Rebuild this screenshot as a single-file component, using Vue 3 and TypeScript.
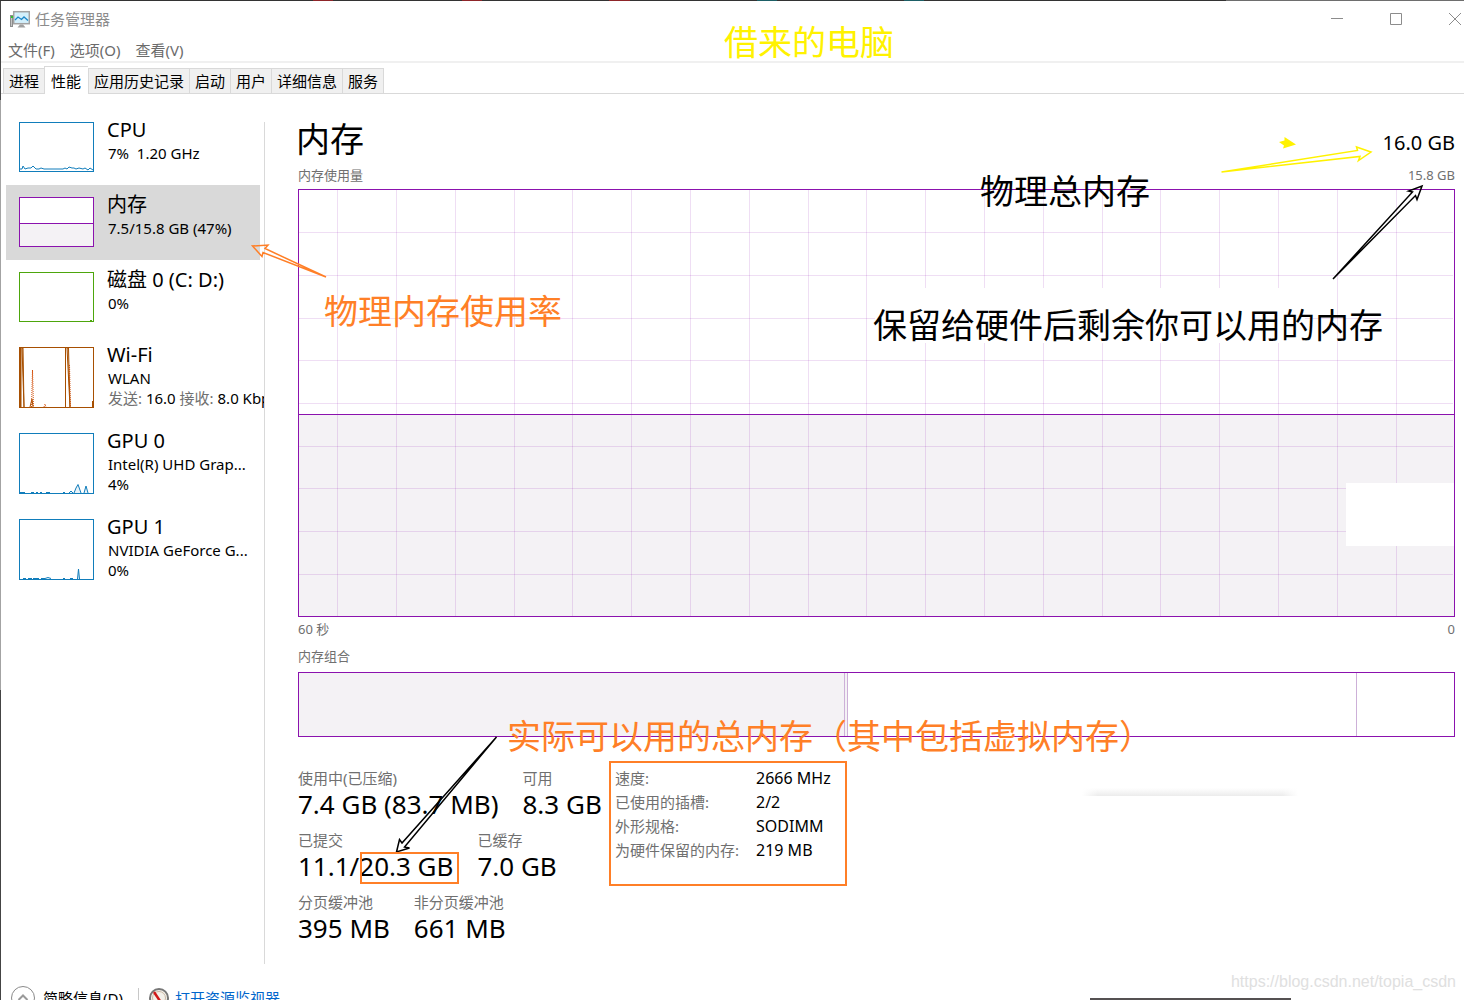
<script setup lang="ts">
interface Metric {
  label: string
  value: string
}

interface Resource {
  id: string
  name: string
  lines: string[]
  color: string
  height: number
}

const menus: string[] = ['文件(F)', '选项(O)', '查看(V)']
const tabs: string[] = ['进程', '性能', '应用历史记录', '启动', '用户', '详细信息', '服务']
const activeTab = '性能'

const resources: Resource[] = [
  { id: 'cpu', name: 'CPU', lines: ['7%  1.20 GHz'], color: '#117dbb', height: 50 },
  { id: 'memory', name: '内存', lines: ['7.5/15.8 GB (47%)'], color: '#8b12ae', height: 50 },
  { id: 'disk', name: '磁盘 0 (C: D:)', lines: ['0%'], color: '#4da60c', height: 50 },
  { id: 'wifi', name: 'Wi-Fi', lines: ['WLAN'], color: '#a74f01', height: 61 },
  { id: 'gpu0', name: 'GPU 0', lines: ['Intel(R) UHD Grap...', '4%'], color: '#117dbb', height: 61 },
  { id: 'gpu1', name: 'GPU 1', lines: ['NVIDIA GeForce G...', '0%'], color: '#117dbb', height: 61 },
]
const activeResource = 'memory'

const columns: number[] = [38, 97, 156, 215, 273, 332, 391, 450, 509, 567, 626, 685, 744, 803, 861, 920, 979, 1038, 1097]
const rows: number[] = [42, 85, 128, 170, 213, 256, 298, 341, 384]

const stats: Metric[][] = [
  [
    { label: '使用中(已压缩)', value: '7.4 GB (83.7 MB)' },
    { label: '可用', value: '8.3 GB' },
  ],
  [
    { label: '已提交', value: '11.1/20.3 GB' },
    { label: '已缓存', value: '7.0 GB' },
  ],
  [
    { label: '分页缓冲池', value: '395 MB' },
    { label: '非分页缓冲池', value: '661 MB' },
  ],
]

const details: Metric[] = [
  { label: '速度:', value: '2666 MHz' },
  { label: '已使用的插槽:', value: '2/2' },
  { label: '外形规格:', value: 'SODIMM' },
  { label: '为硬件保留的内存:', value: '219 MB' },
]
</script>

<template>
  <div class="window">
    <header class="titlebar">
      <svg class="app-icon" width="20" height="18" viewBox="0 0 20 18">
        <rect x="0.5" y="5.500" width="2" height="11" fill="#c4c4c4" stroke="#8d8d8d" />
        <rect x="1" y="6" width="2" height="2" fill="#2fc12f" />
        <rect x="3.700" y="1.700" width="15.600" height="12" fill="#d2effb" stroke="#a2a2a2" stroke-width="1.500" />
        <path d="M5 10 L8 7 L11.500 9.500 L14 7 L18 10.500" fill="none" stroke="#1c86c8" stroke-width="1.300" />
        <path d="M10 14.500 h3 l2.500 3 h-8 z" fill="#a0a0a0" />
      </svg>
      <h1 class="app-title">任务管理器</h1>
      <div class="window-buttons">
        <button type="button" aria-label="最小化">
          <svg width="12" height="12" viewBox="0 0 12 12"><path d="M0 5.500 H12" /></svg>
        </button>
        <button type="button" aria-label="最大化">
          <svg width="12" height="12" viewBox="0 0 12 12"><path d="M0.500 0.500 H11.500 V11.500 H0.500 Z" /></svg>
        </button>
        <button type="button" aria-label="关闭">
          <svg width="12" height="12" viewBox="0 0 12 12"><path d="M0 0 L12 12 M12 0 L0 12" /></svg>
        </button>
      </div>
    </header>

    <nav class="menubar">
      <button v-for="menu in menus" :key="menu" type="button">{{ menu }}</button>
    </nav>

    <div class="tabs" role="tablist">
      <button
        v-for="tab in tabs"
        :key="tab"
        type="button"
        role="tab"
        :aria-selected="tab === activeTab"
        :class="{ active: tab === activeTab }"
      >{{ tab }}</button>
    </div>

    <div class="body">
      <aside class="sidebar">
        <button
          v-for="item in resources"
          :key="item.id"
          type="button"
          class="resource"
          :class="{ active: item.id === activeResource }"
        >
          <svg class="thumb" width="75" :height="item.height" :viewBox="`0 0 75 ${item.height}`" fill="none">
            <rect x="0.5" y="0.5" width="74" :height="item.height - 1" fill="#fff" />
            <g v-if="item.id === 'cpu'" :stroke="item.color">
              <path d="M1 47 L3 47 L4 44 L6 47 L9 46 L12 46 L14 44 L17 47 L20 47 L22 46 L25 47 L44 47 L46 46 L48 47 L50 45 L53 46 L55 46 L57 47 L60 46 L64 47 L66 46 L69 48 L71 46 L74 48" />
            </g>
            <g v-else-if="item.id === 'memory'">
              <rect x="1" y="26" width="73" height="23" fill="#f4f2f5" />
              <path d="M1 26.500 H74" :stroke="item.color" />
            </g>
            <path v-else-if="item.id === 'disk'" d="M71 48.500 h2" :stroke="item.color" />
            <g v-else-if="item.id === 'wifi'" :stroke="item.color">
              <path d="M1.500 1 V60" stroke-width="2" />
              <path d="M3 1 L5 60 L4 1 Z" fill="#e9c9a9" />
              <path d="M46.500 1 V60" />
              <path d="M48 1 H49.500 L51 60 Z" fill="#e9c9a9" />
              <path d="M11 60 L13 52 L14 60" />
              <path d="M12.500 60 L13.500 23 L14.500 60 M50.500 18 L51.500 60 M25 60 L26 57 L27 60" stroke="#d4500b" stroke-dasharray="1 1" />
              <path d="M73.500 60 V54" />
            </g>
            <g v-else-if="item.id === 'gpu0'" :stroke="item.color" fill="#e8f2f8">
              <path d="M1 59.500 H6 M12 59.500 H15 M17 59.500 H19 M21 59.500 H23 M27 59.500 H31 M44 59.500 H46 M50 60 L52 58 L54 60 M55 60 L57 55 L59 51.500 L62 60 M65 60 L67 53 L69 60" />
            </g>
            <g v-else :stroke="item.color" fill="#e8f2f8">
              <path d="M4 59.500 H7 M9 59.500 H13 M14 59.500 H20 M22 59.500 H26 L29 58.500 L32 59.500 M44 59.500 H46 M51 59.500 H54 M58.500 60 L59.500 50 L60.500 60" />
            </g>
            <rect x="0.5" y="0.5" width="74" :height="item.height - 1" :stroke="item.color" />
          </svg>
          <span class="resource-text">
            <span class="resource-name">{{ item.name }}</span>
            <span v-for="line in item.lines" :key="line" class="resource-line">{{ line }}</span>
            <span v-if="item.id === 'wifi'" class="resource-line">
              <span class="muted">发送:</span> 16.0 <span class="muted">接收:</span> 8.0 Kbps
            </span>
          </span>
        </button>
      </aside>

      <main class="panel">
        <div class="panel-head">
          <h2>内存</h2>
          <span class="total">16.0 GB</span>
        </div>
        <div class="caption usage">
          <span>内存使用量</span>
          <span>15.8 GB</span>
        </div>
        <div class="chart">
          <svg viewBox="0 0 1155 426" preserveAspectRatio="none" shape-rendering="crispEdges">
            <rect x="0" y="225" width="1155" height="201" fill="#f4f2f5" />
            <g class="grid-lines">
              <path v-for="x in columns" :key="`c${x}`" :d="`M${x + 0.5} 0 V426`" />
              <path v-for="y in rows" :key="`r${y}`" :d="`M0 ${y + 0.5} H1154`" />
            </g>
            <rect x="576" y="98" width="430" height="55" fill="#fff" />
            <rect x="1047" y="293" width="108" height="63" fill="#fff" />
            <path d="M0 224.500 H1155" stroke="#8b12ae" vector-effect="non-scaling-stroke" />
          </svg>
        </div>
        <div class="caption axis">
          <span>60 秒</span>
          <span>0</span>
        </div>
        <div class="caption composition-title">内存组合</div>
        <div class="composition">
          <span class="in-use"></span>
          <span class="modified"></span>
          <span class="standby"></span>
          <span class="free"></span>
        </div>

        <div class="summary">
          <div class="stats">
            <dl v-for="(row, index) in stats" :key="index" class="stat-row">
              <div v-for="stat in row" :key="stat.label">
                <dt>{{ stat.label }}</dt>
                <dd>{{ stat.value }}</dd>
              </div>
            </dl>
          </div>
          <table class="details">
            <tbody>
              <tr v-for="detail in details" :key="detail.label">
                <th scope="row">{{ detail.label }}</th>
                <td>{{ detail.value }}</td>
              </tr>
            </tbody>
          </table>
        </div>
      </main>
    </div>

    <footer class="footer">
      <button type="button" class="brief">
        <svg width="26" height="26" viewBox="0 0 26 26" fill="none">
          <circle cx="13" cy="13" r="11.500" stroke="#8a8a8a" />
          <path d="M8.500 15 L13 10.500 L17.500 15" stroke="#9a9a9a" stroke-width="2" />
        </svg>
        <span>简略信息(<u>D</u>)</span>
      </button>
      <span class="separator"></span>
      <a href="#monitor" class="monitor">
        <svg width="22" height="22" viewBox="0 0 22 22">
          <circle cx="11" cy="11" r="9" fill="#f3f0ea" stroke="#777" stroke-width="2" />
          <circle cx="11" cy="11" r="6.500" fill="none" stroke="#c9b8a4" />
          <path d="M6 5 L14 17" stroke="#d01818" stroke-width="2.500" />
        </svg>
        <span>打开资源监视器</span>
      </a>
    </footer>

    <div class="annotations">
      <svg class="arrows" width="1464" height="1000" viewBox="0 0 1464 1000" fill="none">
        <path d="M326 277 L265 248.500 L268 245 L252.500 246 L262 256.500 L263 252.500 Z" stroke="#ff7f27" stroke-width="1.500" />
        <path d="M1221.500 172 L1357.500 150.500 L1356.500 147 L1371 152 L1358.500 160.500 L1360 156.500 Z" stroke="#fff200" stroke-width="1.500" />
        <path d="M1279 142 L1284.500 140.500 L1284.500 137 L1296 144.500 L1283 148.500 L1284 145.500 Z" fill="#fff200" />
        <path d="M1333 279 L1412.500 192 L1408.500 191 L1422 186 L1417 199.500 L1415.500 195.500 Z" stroke="#000" stroke-width="1.500" />
        <path d="M496.500 737 L402 843 L399.500 839.500 L396.500 852 L409.500 848 L404.500 847 Z" stroke="#000" stroke-width="1.500" />
      </svg>
      <span class="note note-title">借来的电脑</span>
      <span class="note note-usage">物理内存使用率</span>
      <span class="note note-total">物理总内存</span>
      <span class="note note-available">保留给硬件后剩余你可以用的内存</span>
      <span class="note note-commit">实际可以用的总内存（其中包括虚拟内存）</span>
      <span class="frame-commit"></span>
      <span class="backdrop-shadow"></span>
      <span class="backdrop-bar"></span>
      <span class="watermark">https://blog.csdn.net/topia_csdn</span>
    </div>
  </div>
</template>

<style>
html,
body {
  margin: 0;
  background: #fff;
}
</style>

<style scoped>
.window {
  position: relative;
  box-sizing: border-box;
  height: 100vh;
  overflow: hidden;
  padding: 1px 0 0 1px;
  background:
    linear-gradient(90deg, #333 0 313px, #8e2529 313px 333px, #333 333px 462px, #8e2529 462px 482px, #333 482px 609px, #8e2529 609px 630px, #333 630px 757px, #1d5f66 757px 777px, #333 777px 904px, #1d5f66 904px 924px, #333 924px 1226px, #6e6e6e 1226px) 0 0 / 100% 1px no-repeat,
    linear-gradient(#444 0 100px, #a3a3a3 100px 690px, #444 690px) 0 0 / 1px 100% no-repeat,
    #fff;
  color: #000;
  font-family: "Noto Sans", "Noto Sans CJK SC", sans-serif;
  font-size: 15px;
  line-height: 20px;
}

button {
  margin: 0;
  padding: 0;
  border: 0;
  background: none;
  color: inherit;
  font: inherit;
  text-align: left;
}

.titlebar {
  display: flex;
  align-items: center;
  height: 36px;
  padding-left: 9px;
  color: #8c8c8c;
}

.app-icon {
  margin-right: 5px;
}

.app-title {
  flex: 1;
  margin: 0;
  font-size: 15px;
  font-weight: 400;
}

.window-buttons {
  display: flex;
  gap: 47px;
  padding-right: 3px;
}

.window-buttons button {
  display: flex;
  width: 12px;
}

.window-buttons path {
  fill: none;
  stroke: #8c8c8c;
}

.menubar {
  display: flex;
  gap: 15px;
  height: 24px;
  padding-left: 7px;
  border-bottom: 2px solid #f0f0f0;
  color: #6b6b6b;
}

.menubar button {
  height: 24px;
  line-height: 26px;
}

.tabs {
  display: flex;
  align-items: flex-end;
  height: 30px;
  padding-left: 2px;
  border-bottom: 1px solid #d9d9d9;
}

.tabs button {
  box-sizing: border-box;
  height: 25px;
  padding: 0 5px;
  border: 1px solid #d9d9d9;
  border-width: 1px 0 0 1px;
  background: #f0f0f0;
  white-space: nowrap;
  line-height: 24px;
}

.tabs button:last-child {
  border-right-width: 1px;
}

.tabs button.active {
  height: 28px;
  margin-bottom: -1px;
  padding: 0 7px 0 6px;
  background: #fff;
}

.body {
  display: flex;
  padding: 16px 9px 0 5px;
}

.sidebar {
  position: relative;
  box-sizing: border-box;
  flex: none;
  width: 259px;
  min-height: 854px;
  overflow: hidden;
}

.sidebar::after {
  position: absolute;
  top: 12px;
  right: 0;
  bottom: 0;
  width: 1px;
  background: #d9d9d9;
  content: "";
}

.resource {
  display: flex;
  box-sizing: border-box;
  width: 254px;
  padding: 12px 0 13px 13px;
}

.resource.active {
  background: #d9d9d9;
}

.thumb {
  flex: none;
  margin-right: 13px;
}

.resource-text {
  display: flex;
  flex-direction: column;
  height: 50px;
  margin-top: -4px;
  white-space: nowrap;
}

.resource-name {
  margin-bottom: 1px;
  font-size: 20px;
  line-height: 24px;
}

.resource-line {
  padding-left: 1px;
  white-space: pre;
}

.muted {
  color: #707070;
}

.panel {
  flex: 1;
  min-width: 0;
  padding-left: 33px;
}

.panel-head {
  display: flex;
  align-items: center;
  justify-content: space-between;
  height: 55px;
}

.panel-head h2 {
  margin: 0 0 0 -2px;
  padding-top: 2px;
  font-size: 34px;
  font-weight: 400;
  line-height: 56px;
}

.total {
  padding-top: 10px;
  font-size: 20px;
}

.caption {
  display: flex;
  justify-content: space-between;
  color: #707070;
  font-size: 13px;
  line-height: 20px;
}

.usage {
  padding-bottom: 4px;
}

.chart {
  box-sizing: border-box;
  height: 428px;
  border: 1px solid #8b12ae;
}

.chart svg {
  display: block;
  width: 100%;
  height: 100%;
}

.grid-lines path {
  stroke: rgba(139, 18, 174, 0.14);
  vector-effect: non-scaling-stroke;
}

.axis {
  padding-top: 2px;
}

.composition-title {
  padding: 7px 0 6px;
}

.composition {
  display: flex;
  box-sizing: border-box;
  height: 65px;
  border: 1px solid #8b12ae;
}

.composition span {
  box-sizing: border-box;
  border-right: 1px solid #cdb0d8;
}

.in-use {
  flex: 546;
  background: #f4f2f5;
}

.modified {
  width: 3px;
  background: #f4f2f5;
}

.standby {
  flex: 509;
}

.composition .free {
  flex: 97;
  border: 0;
}

.summary {
  display: flex;
  align-items: flex-start;
  padding-top: 24px;
}

.stats {
  flex: none;
  width: 311px;
  padding-top: 7px;
}

.stat-row {
  display: flex;
  gap: 24px;
  height: 62px;
  margin: 0;
}

.stat-row dt {
  color: #707070;
  line-height: 20px;
}

.stat-row dd {
  margin: 0;
  font-size: 26px;
  line-height: 32px;
  white-space: nowrap;
}

.details {
  box-sizing: border-box;
  width: 238px;
  height: 125px;
  padding: 3px 0 22px 4px;
  border: 2px solid #ff7f27;
  border-spacing: 0;
  table-layout: fixed;
}

.details th,
.details td {
  height: 24px;
  padding: 0;
  line-height: 24px;
  text-align: left;
  white-space: nowrap;
}

.details th {
  width: 141px;
  color: #707070;
  font-weight: 400;
}

.details td {
  font-size: 16px;
}

.footer {
  display: flex;
  align-items: center;
  height: 28px;
  padding: 20px 0 0 9px;
}

.brief,
.monitor {
  display: flex;
  align-items: center;
  white-space: nowrap;
}

.brief {
  gap: 7px;
}

.separator {
  width: 1px;
  height: 20px;
  margin: 0 9px 0 15px;
  background: #c8c8c8;
}

.monitor {
  gap: 5px;
  color: #0066cc;
  text-decoration: none;
}

.annotations {
  position: absolute;
  inset: 0;
  pointer-events: none;
}

.arrows {
  position: absolute;
  top: 0;
  left: 0;
}

.note {
  position: absolute;
  font-size: 34px;
  line-height: 40px;
  white-space: nowrap;
}

.note-title {
  top: 22px;
  left: 724px;
  color: #fff200;
}

.note-usage {
  top: 291px;
  left: 324px;
  color: #ff7f27;
}

.note-total {
  top: 171px;
  left: 980px;
}

.note-available {
  top: 305px;
  left: 873px;
}

.note-commit {
  top: 716px;
  left: 507px;
  color: #ff7f27;
}

.frame-commit {
  position: absolute;
  top: 852px;
  left: 360px;
  box-sizing: border-box;
  width: 99px;
  height: 32px;
  border: 2px solid #ff7f27;
}

.backdrop-shadow {
  position: absolute;
  top: 788px;
  left: 1082px;
  width: 216px;
  height: 8px;
  background: linear-gradient(90deg, #fff, transparent 16px calc(100% - 16px), #fff), linear-gradient(#fff, #ececec);
}

.backdrop-bar {
  position: absolute;
  top: 998px;
  left: 1090px;
  width: 201px;
  height: 2px;
  background: #555152;
}

.watermark {
  position: absolute;
  right: 8px;
  bottom: 8px;
  color: #e0e0e0;
  font-family: "Liberation Sans", Arial, sans-serif;
  font-size: 16px;
}
</style>
